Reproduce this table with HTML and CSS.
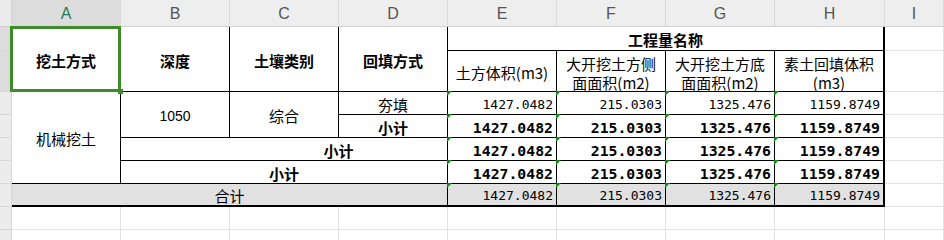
FILE: index.html
```html
<!DOCTYPE html>
<html lang="zh">
<head>
<meta charset="utf-8">
<title>工程量</title>
<link rel="stylesheet" href="styles.css">
</head>
<body>
<div class="sheet">
  <!-- column headers -->
  <div class="c corner"></div>
  <div class="c ch ch-sel">A</div>
  <div class="c ch">B</div>
  <div class="c ch">C</div>
  <div class="c ch">D</div>
  <div class="c ch">E</div>
  <div class="c ch">F</div>
  <div class="c ch">G</div>
  <div class="c ch">H</div>
  <div class="c ch">I</div>

  <!-- row 1 -->
  <div class="c rh rh-sel"></div>
  <div class="c t b r2 sel">挖土方式</div>
  <div class="c t b r2">深度</div>
  <div class="c t b r2">土壤类别</div>
  <div class="c t b r2">回填方式</div>
  <div class="c t b s4 last">工程量名称</div>
  <div class="c"></div>

  <!-- row 2 -->
  <div class="c rh rh-sel"></div>
  <div class="c t hd">土方体积(m3)</div>
  <div class="c t hd"><span class="ln">大开挖土方侧</span><span class="ln">面面积(m2)</span></div>
  <div class="c t hd"><span class="ln">大开挖土方底</span><span class="ln">面面积(m2)</span></div>
  <div class="c t hd last"><span class="ln">素土回填体积</span><span class="ln">(m3)</span></div>
  <div class="c"></div>

  <!-- row 3 -->
  <div class="c rh"></div>
  <div class="c t r4">机械挖土</div>
  <div class="c t r2 latin">1050</div>
  <div class="c t r2">综合</div>
  <div class="c t">夯填</div>
  <div class="c t num tri">1427.0482</div>
  <div class="c t num tri">215.0303</div>
  <div class="c t num tri">1325.476</div>
  <div class="c t num tri last">1159.8749</div>
  <div class="c"></div>

  <!-- row 4 -->
  <div class="c rh"></div>
  <div class="c t b">小计</div>
  <div class="c t num b tri">1427.0482</div>
  <div class="c t num b tri">215.0303</div>
  <div class="c t num b tri">1325.476</div>
  <div class="c t num b tri last">1159.8749</div>
  <div class="c"></div>

  <!-- row 5 -->
  <div class="c rh"></div>
  <div class="c t open"></div>
  <div class="c t b s2">小计</div>
  <div class="c t num b tri">1427.0482</div>
  <div class="c t num b tri">215.0303</div>
  <div class="c t num b tri">1325.476</div>
  <div class="c t num b tri last">1159.8749</div>
  <div class="c"></div>

  <!-- row 6 -->
  <div class="c rh"></div>
  <div class="c t b s3">小计</div>
  <div class="c t num b tri">1427.0482</div>
  <div class="c t num b tri">215.0303</div>
  <div class="c t num b tri">1325.476</div>
  <div class="c t num b tri last">1159.8749</div>
  <div class="c"></div>

  <!-- row 7 -->
  <div class="c rh"></div>
  <div class="c t tot s4">合计</div>
  <div class="c t tot num tri">1427.0482</div>
  <div class="c t tot num tri">215.0303</div>
  <div class="c t tot num tri">1325.476</div>
  <div class="c t tot num tri last">1159.8749</div>
  <div class="c"></div>

  <!-- row 8 -->
  <div class="c rh"></div>
  <div class="c"></div><div class="c"></div><div class="c"></div><div class="c"></div>
  <div class="c"></div><div class="c"></div><div class="c"></div><div class="c"></div><div class="c"></div>

  <!-- row 9 -->
  <div class="c rh"></div>
  <div class="c"></div><div class="c"></div><div class="c"></div><div class="c"></div>
  <div class="c"></div><div class="c"></div><div class="c"></div><div class="c"></div><div class="c"></div>
</div>
</body>
</html>
```

FILE: styles.css
```css
html, body {
  margin: 0;
  padding: 0;
  background: #ffffff;
}

body {
  font-family: "Noto Sans CJK SC", "Noto Sans", sans-serif;
  color: #000;
}

.sheet {
  display: grid;
  grid-template-columns: 12px repeat(7, 109px) 110px 1fr;
  grid-template-rows: 27px 24px 41px repeat(5, 23px) 23px 23px;
  width: 944px;
  height: 240px;
  overflow: hidden;
}

.c {
  box-sizing: border-box;
  position: relative;
  display: flex;
  align-items: center;
  justify-content: center;
  text-align: center;
  padding-top: 3px;
  font-size: 15px;
  line-height: 18px;
  border-right: 1px solid #e2e2e2;
  border-bottom: 1px solid #e2e2e2;
  white-space: nowrap;
}

/* header strip */
.corner {
  background: #ececec;
  border-right: 1px solid #d4d4d4;
  border-bottom: 1px solid #d0d0d0;
}

.ch {
  background: #eeeeee;
  border-right: 1px solid #d9d9d9;
  border-bottom: 1px solid #d0d0d0;
  font-family: "Liberation Sans", Arial, sans-serif;
  font-size: 16px;
  color: #555555;
  padding-top: 1px;
}

.ch-sel {
  background: #dcdcdc;
  color: #1f7a58;
}

.rh {
  background: #ececec;
  border-right: 1px solid #d4d4d4;
  border-bottom: 1px solid #d6d6d6;
}

.rh-sel {
  background: #dcdcdc;
}

/* table cells */
.t {
  border-right: 1px solid #000;
  border-bottom: 1px solid #000;
}

.open {
  border-right: none;
}

.b {
  font-weight: 700;
}

.hd {
  flex-direction: column;
  line-height: 19px;
}

.ln {
  display: block;
  height: 19px;
}

.latin {
  font-family: "Liberation Sans", Arial, sans-serif;
  font-size: 14px;
}

.last {
  border-right-width: 2px;
}

.tot {
  background: #e1e1e1;
  border-bottom-width: 2px;
}

.num {
  justify-content: flex-end;
  padding-right: 3px;
  font-family: "DejaVu Sans Mono", "Liberation Mono", monospace;
  font-size: 13px;
}

.num.b {
  font-size: 14.8px;
  padding-right: 3px;
}

/* spans */
.r2 { grid-row: span 2; }
.r4 { grid-row: span 4; }
.s2 { grid-column: span 2; }
.s3 { grid-column: span 3; }
.s4 { grid-column: span 4; }

/* green "number stored as text" marks */
.tri::before {
  content: "";
  position: absolute;
  top: -1px;
  left: -1px;
  width: 0;
  height: 0;
  border-top: 5px solid #138a13;
  border-right: 5px solid transparent;
}

/* selection rectangle */
.sel::after {
  content: "";
  position: absolute;
  left: -2px;
  top: -1px;
  width: 111px;
  height: 66px;
  box-sizing: border-box;
  border: 3px solid #3d8c29;
  z-index: 2;
}

.sel::before {
  content: "";
  position: absolute;
  right: -3px;
  bottom: -3px;
  width: 5px;
  height: 5px;
  background: #3d8c29;
  z-index: 3;
}
```
